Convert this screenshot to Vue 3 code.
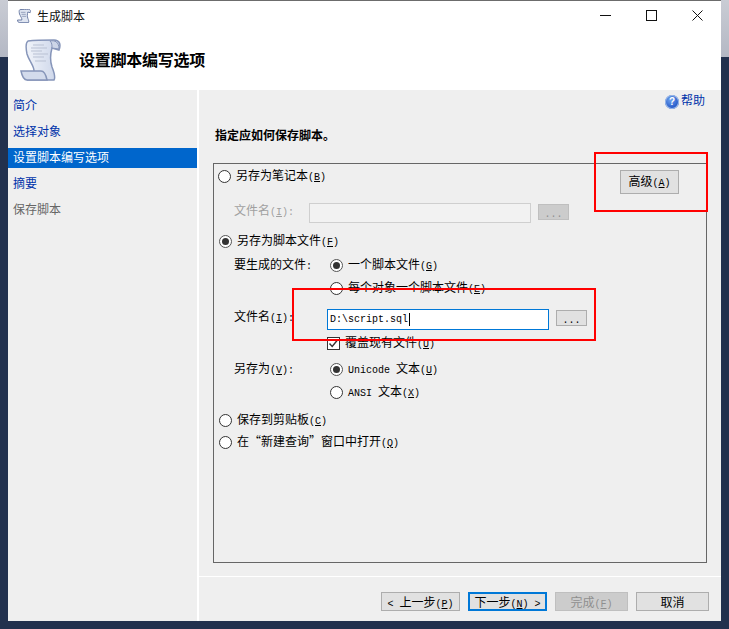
<script setup>
const nav = [
  { label: '简介', state: 'link' },
  { label: '选择对象', state: 'link' },
  { label: '设置脚本编写选项', state: 'selected' },
  { label: '摘要', state: 'link' },
  { label: '保存脚本', state: 'muted' }
]
</script>

<template>
  <div class="page">
    <div class="edge"></div>
    <main class="window">
      <header class="titlebar">
        <svg class="tiny-icon" viewBox="20 40 41 42" width="14" height="14">
          <path d="M28 42C36 41 48 41 54 41C60 41 61 46 59 51L52 49C50 56 50 62 52 68C54 73 56 78 54 81H28C24 81 21 78 21 73H34C35 68 30 62 27 55C26 50 25 44 28 42Z" fill="#dfe5f1" stroke="#6f7fa6" stroke-width="3"/>
          <path d="M31 50H45M33 56H46M35 62H47" stroke="#8c98b4" stroke-width="2.5"/>
        </svg>
        <span class="title-text">生成脚本</span>
        <div class="controls">
          <svg width="11" height="11" viewBox="0 0 11 11"><path d="M0 5.5H11" stroke="#111"/></svg>
          <svg width="11" height="11" viewBox="0 0 11 11"><rect x=".5" y=".5" width="10" height="10" fill="none" stroke="#111"/></svg>
          <svg width="11" height="11" viewBox="0 0 11 11"><path d="M.5.5L10.5 10.5M10.5.5L.5 10.5" stroke="#111"/></svg>
        </div>
      </header>

      <div class="banner">
        <svg class="big-icon" viewBox="20 40 41 42" width="41" height="42">
          <defs>
            <linearGradient id="scrollFill" x1="0" x2="1" y1="0" y2="0">
              <stop offset="0" stop-color="#f1f4fa"/>
              <stop offset="1" stop-color="#c9d3e8"/>
            </linearGradient>
          </defs>
          <path d="M28 42C36 41 48 41 54 41C60 41 61 46 59 51L52 49C50 56 50 62 52 68C54 73 56 78 54 81H28L34 73C35 68 29 62 27 55C26 50 25 44 28 42Z" fill="url(#scrollFill)" stroke="#8695b9" stroke-width="1.5"/>
          <path d="M50 42C55 41 59 43 59 50L52 49C52 46 52 44 50 42Z" fill="#cdd6e8" stroke="#8695b9"/>
          <path d="M21 72H41C44 72 46 76 47 81H27C24 81 22 77 21 72Z" fill="#d3dbec" stroke="#8695b9" stroke-width="1.5"/>
          <path d="M33 46H44M31 49H47M31 52H42M33 55H48M33 58H44M35 62H46" stroke="#b9c1d3"/>
        </svg>
        <h1 class="banner-title">设置脚本编写选项</h1>
      </div>

      <div class="content">
        <nav class="sidebar">
          <div v-for="item in nav" :key="item.label" class="nav-row">
            <span class="nav-item" :class="item.state">{{ item.label }}</span>
          </div>
        </nav>

        <section class="panel">
          <div class="help">
            <span class="help-icon">?</span>
            <span class="help-text">帮助</span>
          </div>
          <h2 class="instruction">指定应如何保存脚本。</h2>

          <div class="group">
            <div class="row radio-row">
              <span class="radio"></span>
              <span class="txt">另存为笔记本<span class="mn">(<u>B</u>)</span></span>
              <button class="btn advanced" type="button">高级<span class="mn">(<u>A</u>)</span></button>
            </div>

            <div class="row sub-row">
              <span class="label short disabled">文件名<span class="mn">(<u>I</u>):</span></span>
              <div class="field field-off"></div>
              <button class="btn browse off" type="button"><span class="mn">...</span></button>
            </div>

            <div class="row radio-row shift">
              <span class="radio on"></span>
              <span class="txt">另存为脚本文件<span class="mn">(<u>F</u>)</span></span>
            </div>

            <div class="row sub-row">
              <span class="label wide">要生成的文件<span class="mn">:</span></span>
              <span class="radio on"></span>
              <span class="txt">一个脚本文件<span class="mn">(<u>G</u>)</span></span>
            </div>

            <div class="row sub-row indent">
              <span class="radio"></span>
              <span class="txt">每个对象一个脚本文件<span class="mn">(<u>E</u>)</span></span>
            </div>

            <div class="row sub-row">
              <span class="label mid">文件名<span class="mn">(<u>I</u>):</span></span>
              <div class="field field-on"><span class="mn">D:\script.sql</span><i class="caret"></i></div>
              <button class="btn browse" type="button"><span class="mn">...</span></button>
            </div>

            <div class="row sub-row check-row">
              <span class="check">
                <svg width="13" height="13" viewBox="0 0 13 13"><path d="M2.5 6.5L5.2 9.5L10.5 3" fill="none" stroke="#333" stroke-width="1.4"/></svg>
              </span>
              <span class="txt">覆盖现有文件<span class="mn">(<u>U</u>)</span></span>
            </div>

            <div class="row sub-row">
              <span class="label wide">另存为<span class="mn">(<u>V</u>):</span></span>
              <span class="radio on"></span>
              <span class="txt"><span class="mn">Unicode </span>文本<span class="mn">(<u>U</u>)</span></span>
            </div>

            <div class="row sub-row indent">
              <span class="radio"></span>
              <span class="txt"><span class="mn">ANSI </span>文本<span class="mn">(<u>X</u>)</span></span>
            </div>

            <div class="row radio-row shift">
              <span class="radio"></span>
              <span class="txt">保存到剪贴板<span class="mn">(<u>C</u>)</span></span>
            </div>

            <div class="row radio-row shift">
              <span class="radio"></span>
              <span class="txt">在“新建查询”窗口中打开<span class="mn">(<u>Q</u>)</span></span>
            </div>
          </div>

          <div class="separator"></div>

          <footer class="footer">
            <button class="btn foot w79" type="button"><span class="mn">&lt; </span>上一步<span class="mn">(<u>P</u>)</span></button>
            <button class="btn foot w79 primary" type="button">下一步<span class="mn">(<u>N</u>) &gt;</span></button>
            <button class="btn foot w73 off" type="button">完成<span class="mn">(<u>F</u>)</span></button>
            <button class="btn foot w73" type="button">取消</button>
          </footer>
        </section>
      </div>
    </main>
    <div class="edge"></div>

    <div class="mark mark-advanced"></div>
    <div class="mark mark-file"></div>
  </div>
</template>

<style>
html, body { margin: 0; background: #22314e; }
</style>

<style scoped>
.page {
  position: relative;
  display: flex;
  width: 729px;
  height: 629px;
  overflow: hidden;
  background: #22314e;
  color: #000;
  font: 12px/16px "Noto Sans CJK SC", "Liberation Sans", sans-serif;
}
.edge {
  width: 8px;
  height: 57px;
  flex: none;
  background: linear-gradient(#c9ccd4, #b4b8c4);
}
.window {
  width: 713px;
  height: 621px;
  flex: none;
  display: flex;
  flex-direction: column;
  box-sizing: border-box;
  border-top: 1px solid #6c6c6c;
  background: #fff;
}
.mn {
  font-family: "Liberation Mono", monospace;
  font-size: 10px;
}
.titlebar {
  height: 29px;
  flex: none;
  display: flex;
  align-items: center;
  padding-left: 9px;
}
.tiny-icon { margin-right: 6px; }
.title-text { color: #111; }
.controls {
  margin-left: auto;
  display: flex;
  gap: 35px;
  padding-right: 18px;
}
.banner {
  height: 60px;
  flex: none;
  display: flex;
  align-items: center;
  padding-left: 12px;
}
.banner-title {
  margin: 0 0 2px 18px;
  font-size: 16px;
  line-height: 20px;
  font-weight: 700;
  letter-spacing: -0.25px;
}
.content {
  flex: 1;
  display: flex;
  gap: 2px;
  min-height: 0;
}
.sidebar {
  width: 189px;
  flex: none;
  padding-top: 3px;
  background: #efefef;
}
.nav-row {
  height: 26px;
  display: flex;
  align-items: center;
}
.nav-item {
  flex: 1;
  height: 20px;
  padding-left: 5px;
  line-height: 18px;
}
.nav-item.link { color: #0033aa; }
.nav-item.muted { color: #666; }
.nav-item.selected { background: #0066cc; color: #fff; }
.panel {
  flex: 1;
  min-width: 0;
  display: flex;
  flex-direction: column;
  background: #efefef;
}
.help {
  height: 20px;
  display: flex;
  align-items: center;
  justify-content: flex-end;
  gap: 2px;
  padding-right: 16px;
}
.help-icon {
  width: 14px;
  height: 14px;
  margin-top: 3px;
  border-radius: 50%;
  background: radial-gradient(circle at 40% 35%, #6fa3ee, #1c50c4 75%);
  box-shadow: inset 0 0 0 1px #9dbbe8;
  color: #fff;
  font: 700 10px/14px "Liberation Sans", sans-serif;
  text-align: center;
}
.help-text { color: #0033aa; }
.instruction {
  margin: 15px 0 0 16px;
  height: 20px;
  font-size: 12px;
  line-height: 20px;
  font-weight: 700;
}
.group {
  margin: 18px 14px 0;
  height: 400px;
  box-sizing: border-box;
  padding-top: 1px;
  border: 1px solid #666;
  display: grid;
  grid-template-rows: 35px 30px 24px 23px 29px 26px 26px 23px 28px 22px 1fr;
  align-items: start;
}
.row {
  height: 22px;
  display: flex;
  align-items: center;
  min-width: 0;
}
.radio-row { padding-left: 4px; }
.radio-row.shift { padding-left: 5px; }
.sub-row { padding-left: 20px; }
.sub-row.indent { padding-left: 116px; }
.check-row { padding-left: 113px; }
.label { flex: none; white-space: nowrap; }
.label.short { width: 75px; }
.label.mid { width: 93px; }
.label.wide { width: 96px; }
.disabled { color: #a0a0a0; }
.radio {
  position: relative;
  width: 13px;
  height: 13px;
  flex: none;
  box-sizing: border-box;
  border: 1px solid #333;
  border-radius: 50%;
  background: #fff;
  margin-right: 5px;
}
.radio.on { border-color: #555; margin-top: 1px; }
.radio.on::after {
  content: "";
  position: absolute;
  inset: 2px;
  border-radius: 50%;
  background: #333;
}
.check {
  width: 13px;
  height: 13px;
  flex: none;
  box-sizing: border-box;
  border: 1px solid #333;
  background: #fff;
  margin-right: 5px;
  display: flex;
  align-items: center;
  justify-content: center;
}
.check svg { flex: none; }
.txt { white-space: nowrap; }
.field {
  box-sizing: border-box;
  width: 222px;
  flex: none;
  display: flex;
  align-items: center;
}
.field-off {
  height: 20px;
  margin-top: 4px;
  border: 1px solid #cfcfcf;
  background: #f2f2f2;
}
.field-on {
  height: 21px;
  margin-top: 5px;
  border: 1px solid #0078d7;
  background: #fff;
  padding-left: 2px;
}
.caret {
  width: 1px;
  height: 13px;
  margin-left: 1px;
  background: #000;
}
.btn {
  box-sizing: border-box;
  margin: 0;
  padding: 0;
  border: 1px solid #adadad;
  background: #e1e1e1;
  color: #000;
  font: inherit;
  white-space: nowrap;
}
.btn.off { background: #cccccc; border-color: #bfbfbf; color: #8f8f8f; }
.advanced {
  width: 59px;
  height: 24px;
  margin-left: auto;
  margin-right: 27px;
  align-self: flex-start;
  margin-top: 5px;
  flex: none;
}
.browse {
  width: 31px;
  height: 16px;
  margin-left: 7px;
  margin-top: 2px;
  flex: none;
  line-height: 14px;
}
.separator {
  height: 1px;
  margin-top: 13px;
  flex: none;
  background: #fff;
}
.footer {
  display: flex;
  justify-content: flex-end;
  gap: 8px;
  padding: 15px 12px 0 0;
}
.foot { height: 19px; line-height: 17px; }
.w79 { width: 79px; }
.w73 { width: 73px; }
.primary { border: 2px solid #0078d7; line-height: 15px; }
.mark {
  position: absolute;
  box-sizing: border-box;
  border: 2px solid #ff0000;
  pointer-events: none;
}
.mark-advanced { left: 594px; top: 152px; width: 114px; height: 60px; }
.mark-file { left: 292px; top: 288px; width: 304px; height: 53px; }
</style>
